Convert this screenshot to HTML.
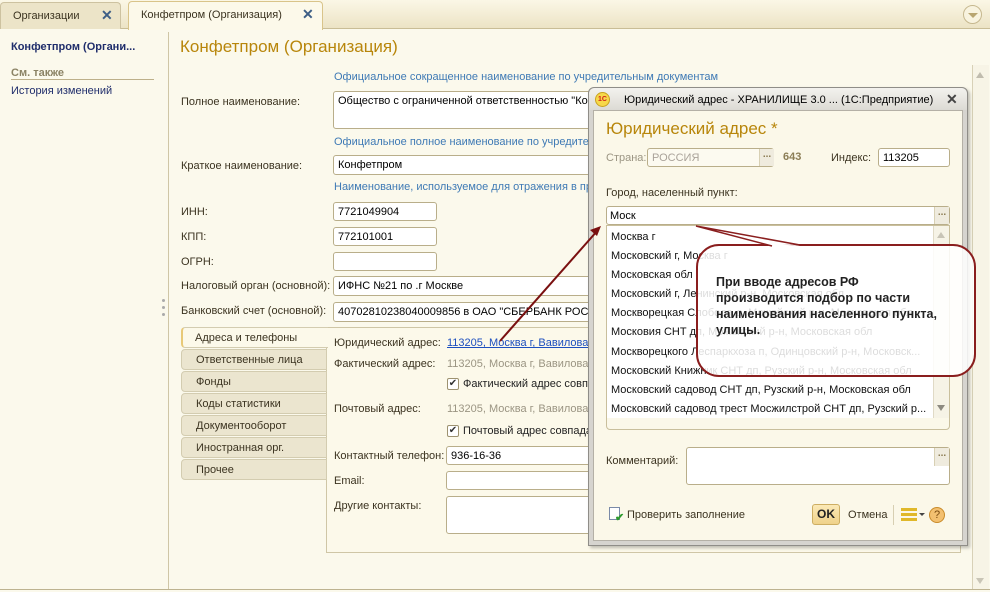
<!DOCTYPE html>
<html><head><meta charset="utf-8">
<style>
*{margin:0;padding:0;box-sizing:border-box}
body{width:990px;height:592px;overflow:hidden;background:#fbf9ec;font-family:"Liberation Sans",sans-serif;font-size:11px;color:#3b3320;position:relative}
.a{position:absolute;white-space:nowrap}
.inp{position:absolute;background:#fff;border:1px solid #b9ae8a;border-radius:3px;padding:3px 4px 0;color:#000;font-size:11px;overflow:hidden;white-space:nowrap}
.blue{color:#3f7ab5}
.tab{position:absolute;left:181px;width:146px;height:21px;background:#ebe5cf;border:1px solid #d3ccb0;border-radius:4px 0 0 4px;padding:4px 0 0 14px;color:#3b3320}
.dot{position:absolute;width:3px;height:3px;border-radius:50%;background:#aaa}
.dd{position:absolute;width:15px;background:#efebde;border-left:1px solid #d8d0b4;color:#8a7a50;font-size:10px;text-align:center;font-weight:bold}
</style></head><body>
<div class="a" style="left:0;top:0;width:990px;height:29px;background:linear-gradient(#fbf7e6,#ece3c5);border-bottom:1px solid #c9bd96"></div>
<div class="a" style="left:0;top:2px;width:121px;height:27px;background:#ece4c8;border:1px solid #cdc2a0;border-bottom:none;border-radius:4px 4px 0 0;padding:7px 0 0 12px;color:#3b3320">Организации<span style="position:absolute;left:100px;top:4px;color:#3d5e86;font-size:14px;font-weight:bold">✕</span></div>
<div class="a" style="left:128px;top:1px;width:195px;height:29px;background:#fcf9ea;border:1px solid #d9c48a;border-bottom:none;border-radius:4px 4px 0 0;padding:7px 0 0 12px;color:#3b3320">Конфетпром (Организация)<span style="position:absolute;left:173px;top:4px;color:#3d5e86;font-size:14px;font-weight:bold">✕</span></div>
<div class="a" style="left:963px;top:5px;width:19px;height:19px;border:1px solid #c6b88f;border-radius:50%;background:#f8f3df"><div style="position:absolute;left:4px;top:7px;border:5px solid transparent;border-top:5px solid #b8a570;border-bottom:none"></div></div>
<div class="a" style="left:168px;top:32px;width:1px;height:557px;background:#cfc6a6"></div>
<div class="a" style="left:11px;top:41px;font-weight:bold;color:#1f2d6b">Конфетпром (Органи...</div>
<div class="a" style="left:11px;top:67px;font-weight:bold;color:#8b8365">См. также</div>
<div class="a" style="left:11px;top:79px;width:143px;height:1px;background:#bdb08a"></div>
<div class="a" style="left:11px;top:85px;color:#1f2d6b">История изменений</div>
<div class="dot" style="left:162px;top:299px"></div><div class="dot" style="left:162px;top:306px"></div><div class="dot" style="left:162px;top:313px"></div>
<div class="a" style="left:0;top:589px;width:990px;height:1px;background:#bdb390"></div>
<div class="a" style="left:972px;top:65px;width:17px;height:524px;background:#f7f4e6;border-left:1px solid #d8d1b7"></div>
<div class="a" style="left:976px;top:72px;border:4px solid transparent;border-bottom:6px solid #c0bcae;border-top:none"></div>
<div class="a" style="left:976px;top:578px;border:4px solid transparent;border-top:6px solid #c9c5b6;border-bottom:none"></div>
<div class="a" style="left:180px;top:37px;font-size:17px;color:#b8860b">Конфетпром (Организация)</div>
<div class="a blue" style="left:334px;top:71px">Официальное сокращенное наименование по учредительным документам</div>
<div class="a" style="left:181px;top:96px">Полное наименование:</div>
<div class="inp" style="left:333px;top:91px;width:260px;height:38px">Общество с ограниченной ответственностью "Ко</div>
<div class="a blue" style="left:334px;top:136px">Официальное полное наименование по учредител</div>
<div class="a" style="left:181px;top:160px">Краткое наименование:</div>
<div class="inp" style="left:333px;top:155px;width:260px;height:20px">Конфетпром</div>
<div class="a blue" style="left:334px;top:181px">Наименование, используемое для отражения в пр</div>
<div class="a" style="left:181px;top:206px">ИНН:</div>
<div class="inp" style="left:333px;top:202px;width:104px;height:19px">7721049904</div>
<div class="a" style="left:181px;top:231px">КПП:</div>
<div class="inp" style="left:333px;top:227px;width:104px;height:19px">772101001</div>
<div class="a" style="left:181px;top:256px">ОГРН:</div>
<div class="inp" style="left:333px;top:252px;width:104px;height:19px"></div>
<div class="a" style="left:181px;top:280px">Налоговый орган (основной):</div>
<div class="inp" style="left:333px;top:276px;width:260px;height:20px">ИФНС №21 по .г Москве</div>
<div class="a" style="left:181px;top:305px">Банковский счет (основной):</div>
<div class="inp" style="left:333px;top:302px;width:260px;height:20px">40702810238040009856 в ОАО "СБЕРБАНК РОСС</div>
<div class="a" style="left:326px;top:327px;width:635px;height:226px;border:1px solid #cfc6a6;background:#fcf9ea"></div>
<div class="tab" style="top:327px;background:#fcf9ea;border-right:none;border-left:2px solid #e8c978;width:147px;padding-left:12px">Адреса и телефоны</div>
<div class="tab" style="top:349px">Ответственные лица</div>
<div class="tab" style="top:371px">Фонды</div>
<div class="tab" style="top:393px">Коды статистики</div>
<div class="tab" style="top:415px">Документооборот</div>
<div class="tab" style="top:437px">Иностранная орг.</div>
<div class="tab" style="top:459px">Прочее</div>
<div class="a" style="left:334px;top:337px">Юридический адрес:</div>
<div class="a" style="left:447px;top:337px;color:#1d4fbf;text-decoration:underline">113205, Москва г, Вавилова</div>
<div class="a" style="left:334px;top:358px">Фактический адрес:</div>
<div class="a" style="left:447px;top:358px;color:#9b9583">113205, Москва г, Вавилова</div>
<div class="a" style="left:447px;top:378px;width:12px;height:12px;border:1px solid #9d9270;border-radius:2px;background:#fff;font-size:10px;line-height:10px;text-align:center;color:#333">✔</div>
<div class="a" style="left:463px;top:378px;color:#222">Фактический адрес совп</div>
<div class="a" style="left:334px;top:403px">Почтовый адрес:</div>
<div class="a" style="left:447px;top:403px;color:#9b9583">113205, Москва г, Вавилова</div>
<div class="a" style="left:447px;top:425px;width:12px;height:12px;border:1px solid #9d9270;border-radius:2px;background:#fff;font-size:10px;line-height:10px;text-align:center;color:#333">✔</div>
<div class="a" style="left:463px;top:425px;color:#222">Почтовый адрес совпада</div>
<div class="a" style="left:334px;top:450px">Контактный телефон:</div>
<div class="inp" style="left:446px;top:446px;width:150px;height:19px">936-16-36</div>
<div class="a" style="left:334px;top:475px">Email:</div>
<div class="inp" style="left:446px;top:471px;width:150px;height:19px"></div>
<div class="a" style="left:334px;top:500px">Другие контакты:</div>
<div class="inp" style="left:446px;top:496px;width:150px;height:38px"></div>
<!-- modal -->
<div class="a" style="left:588px;top:87px;width:380px;height:459px;background:#d6d4cf;border:1px solid #8f8d88;border-radius:6px 6px 0 0;box-shadow:2px 2px 3px rgba(0,0,0,.25)"></div>
<div class="a" style="left:589px;top:88px;width:378px;height:22px;background:linear-gradient(#f3f2ee,#dcdad4);border-radius:6px 6px 0 0"></div>
<div class="a" style="left:595px;top:92px;width:15px;height:15px;border-radius:50%;background:#f7d84a;border:1px solid #c9a21e;color:#d0221b;font-size:7px;font-weight:bold;text-align:center;line-height:13px">1С</div>
<div class="a" style="left:624px;top:94px;color:#000">Юридический адрес - ХРАНИЛИЩЕ 3.0 ...  (1С:Предприятие)</div>
<div class="a" style="left:946px;top:91px;font-size:14px;font-weight:bold;color:#444">✕</div>
<div class="a" style="left:593px;top:110px;width:370px;height:431px;background:#fbf8e9;border:1px solid #b4b0a6"></div>
<div class="a" style="left:606px;top:119px;font-size:17px;color:#b8860b">Юридический адрес *</div>
<div class="a" style="left:606px;top:152px;color:#9b9583">Страна:</div>
<div class="inp" style="left:647px;top:148px;width:127px;height:19px;color:#aaa39a;background:#fcfaf0">РОССИЯ</div>
<div class="dd" style="left:759px;top:149px;height:17px">...</div>
<div class="a" style="left:783px;top:151px;font-weight:bold;color:#8b7d55">643</div>
<div class="a" style="left:831px;top:152px">Индекс:</div>
<div class="inp" style="left:878px;top:148px;width:72px;height:19px">113205</div>
<div class="a" style="left:606px;top:187px">Город, населенный пункт:</div>
<div class="inp" style="left:606px;top:206px;width:344px;height:19px;padding-left:3px">Моск</div>
<div class="dd" style="left:934px;top:207px;height:17px">...</div>
<div class="a" style="left:606px;top:225px;width:344px;height:205px;border:1px solid #c9bf9c;border-radius:0 0 4px 4px;background:#fbf8e9"></div>
<div class="a" style="left:607px;top:226px;width:326px;height:192px;background:#fff;color:#111;line-height:19.1px;padding:2px 0 0 4px">
Москва г<br>Московский г, Москва г<br>Московская обл<br>Московский г, Ленинский р-н, Московская обл<br>Москворецкая Слобода д, Можайский р-н, Московская обл<br>Московия СНТ дп, Можайский р-н, Московская обл<br>Москворецкого Леспаркхоза п, Одинцовский р-н, Московск...<br>Московский Книжник СНТ дп, Рузский р-н, Московская обл<br>Московский садовод СНТ дп, Рузский р-н, Московская обл<br>Московский садовод трест Мосжилстрой СНТ дп, Рузский р...</div>
<div class="a" style="left:933px;top:226px;width:16px;height:192px;background:#f6f3e6;border-left:1px solid #e0dac6"></div>
<div class="a" style="left:937px;top:232px;border:4px solid transparent;border-bottom:6px solid #c8c4b6;border-top:none"></div>
<div class="a" style="left:937px;top:405px;border:4px solid transparent;border-top:6px solid #8d8a80;border-bottom:none"></div>
<div class="a" style="left:606px;top:455px">Комментарий:</div>
<div class="inp" style="left:686px;top:447px;width:264px;height:38px"></div>
<div class="dd" style="left:934px;top:448px;height:18px">...</div>
<div class="a" style="left:609px;top:507px;width:11px;height:13px;background:#fff;border:1px solid #7a8aa8"></div>
<div class="a" style="left:615px;top:511px;color:#2d9a2d;font-size:11px;font-weight:bold">✔</div>
<div class="a" style="left:627px;top:509px">Проверить заполнение</div>
<div class="a" style="left:812px;top:504px;width:28px;height:21px;background:linear-gradient(#fbe9b6,#efd28a);border:1px solid #cdae62;border-radius:3px;font-weight:bold;font-size:12px;text-align:center;line-height:19px;color:#222">OK</div>
<div class="a" style="left:848px;top:509px">Отмена</div>
<div class="a" style="left:893px;top:505px;width:1px;height:20px;background:#d7cfb2"></div>
<div class="a" style="left:901px;top:508px;width:16px;height:3px;background:#e0b82a;box-shadow:0 5px 0 #e0b82a,0 10px 0 #e0b82a"></div>
<div class="a" style="left:919px;top:513px;border:3px solid transparent;border-top:3px solid #444;border-bottom:none"></div>
<div class="a" style="left:929px;top:507px;width:16px;height:16px;border-radius:50%;background:#f3c070;border:1px solid #c98b2a;text-align:center;font-size:11px;line-height:14px;color:#7a4a10">?</div>
<svg class="a" style="left:0;top:0" width="990" height="592">
<line x1="500" y1="341" x2="598" y2="230" stroke="#7a1010" stroke-width="2"/>
<polygon points="601,226 590,230 597,236" fill="#7a1010"/>
<rect x="697" y="245" width="278" height="131" rx="22" fill="#fff" fill-opacity=".85" stroke="#8a1e1e" stroke-width="2"/>
<polygon points="698,227 770,246 800,246" fill="#fff" fill-opacity=".85"/>
<polygon points="700,227 780,248 802,248" fill="#fff"/>
<polyline points="772,246 696,226 800,245" fill="none" stroke="#8a1e1e" stroke-width="1.5"/>
</svg>
<div class="a" style="left:716px;top:274px;font-weight:bold;font-size:12.5px;line-height:16px;color:#222">При вводе адресов РФ<br>производится подбор по части<br>наименования населенного пункта,<br>улицы.</div>
</body></html>
